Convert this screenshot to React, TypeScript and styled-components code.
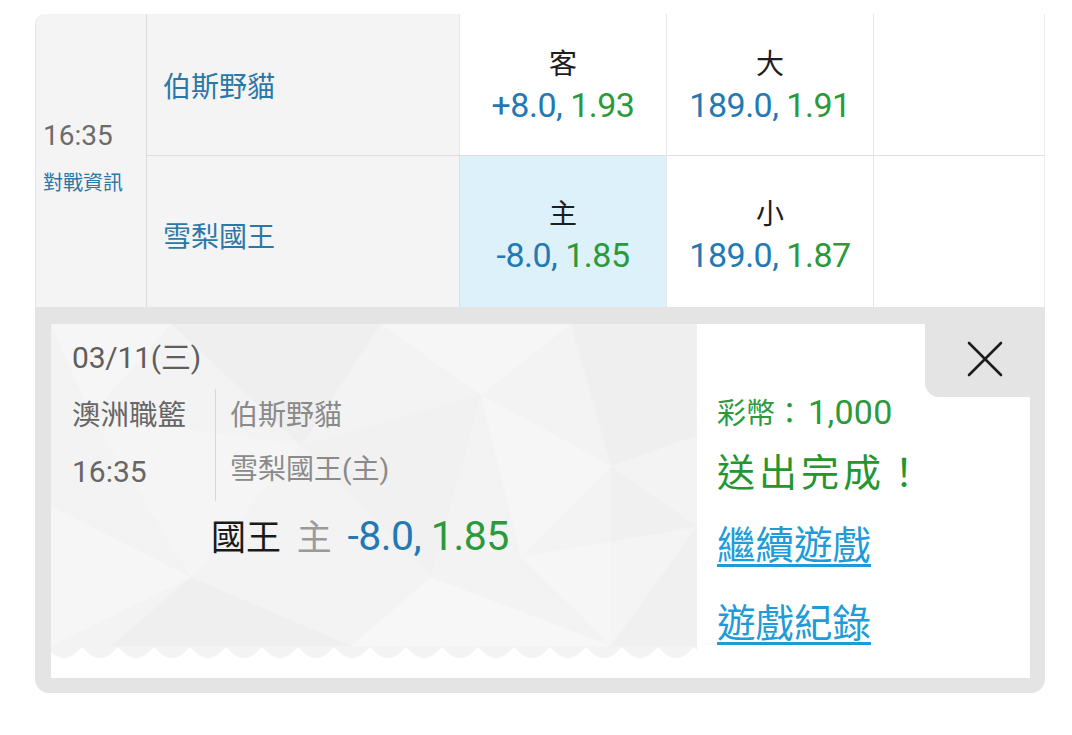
import React from "react";
import styled, { createGlobalStyle } from "styled-components";

const GlobalStyle = createGlobalStyle`
  html, body { margin: 0; padding: 0; background: #ffffff; }
  body { font-family: Roboto, "Noto Sans CJK TC", "Noto Sans", sans-serif; }
  * { box-sizing: border-box; }
`;

const Page = styled.div`
  padding: 14px 27px 0 35px;
`;

const Table = styled.div`
  display: grid;
  grid-template-columns: 111px 312px 207px 207px 1fr;
  grid-template-rows: 142px 151px;
  border-top-left-radius: 10px;
  border-left: 1px solid #e6e6e6;
  border-right: 1px solid #ececec;
  overflow: hidden;
  background: #f4f4f4;
`;

const TimeCell = styled.div`
  grid-row: 1 / span 2;
  display: flex;
  flex-direction: column;
  justify-content: center;
  padding: 0 0 8px 7px;
  border-right: 1px solid #dcdcdc;
`;

const TimeText = styled.div`
  font-size: 28px;
  line-height: 40px;
  color: #6c6c6c;
`;

const InfoLink = styled.div`
  margin-top: 12px;
  font-size: 20px;
  line-height: 30px;
  color: #2a78a8;
`;

const TeamCell = styled.div<{ $last?: boolean }>`
  display: flex;
  align-items: center;
  padding: ${(p) => (p.$last ? "6px" : "0")} 0 0 16px;
  font-size: 28px;
  color: #2a78a8;
  border-bottom: ${(p) => (p.$last ? "none" : "1px solid #dedede")};
`;

const OddsCell = styled.div<{ $active?: boolean; $last?: boolean }>`
  display: flex;
  flex-direction: column;
  align-items: center;
  justify-content: center;
  padding-top: ${(p) => (p.$last ? "6px" : "0")};
  background: ${(p) => (p.$active ? "#ddf1fb" : "#ffffff")};
  border-left: 1px solid ${(p) => (p.$active ? "#c9e2ef" : "#e6e6e6")};
  border-bottom: ${(p) => (p.$last ? "none" : "1px solid #dedede")};
`;

const OddsLabel = styled.div`
  font-size: 28px;
  line-height: 40px;
  color: #1e1e1e;
`;

const OddsValue = styled.div`
  font-size: 34px;
  line-height: 40px;
  letter-spacing: -0.5px;
`;

const Blue = styled.span`
  color: #2279b5;
`;

const Green = styled.span`
  color: #2a9a3a;
`;

const Panel = styled.div`
  background: #e4e4e4;
  padding: 17px 15px 15px 16px;
  border-radius: 0 0 14px 14px;
`;

const Ticket = styled.div`
  display: flex;
  height: 354px;
  background: #ffffff;
`;

const LeftPane = styled.div`
  width: 646px;
  display: flex;
  flex-direction: column;
  padding-bottom: 18px;
`;

const LeftContent = styled.div`
  position: relative;
  flex: 1;
  background: #f3f3f3;
  overflow: hidden;
  padding: 14px 0 0 21px;
`;

const Teeth = styled.svg`
  display: block;
  width: 100%;
  height: 14px;
`;

const Pattern = styled.svg`
  position: absolute;
  inset: 0;
  width: 100%;
  height: 100%;
`;

const Layer = styled.div`
  position: relative;
`;

const DateLine = styled.div`
  font-size: 30px;
  line-height: 40px;
  letter-spacing: -0.2px;
  color: #5e5e5e;
`;

const InfoGrid = styled.div`
  display: flex;
  margin-top: 11px;
`;

const LeagueCol = styled.div`
  width: 144px;
  border-right: 1px solid #d8d8d8;
  margin-bottom: 8px;
`;

const LeagueLine = styled.div`
  font-size: 28.5px;
  line-height: 54px;
  color: #666666;
`;

const TimeLine = styled(LeagueLine)`
  font-size: 30px;
  line-height: 58px;
`;

const NamesCol = styled.div`
  padding-left: 14px;
`;

const NameLine = styled.div`
  font-size: 28px;
  line-height: 54px;
  color: #8a8a8a;
`;

const BetLine = styled.div`
  margin-top: 4px;
  padding-left: 139px;
  font-size: 35px;
  line-height: 46px;
  word-spacing: 7px;
`;

const BetNum = styled.span`
  font-size: 41px;
  letter-spacing: -0.5px;
  word-spacing: 0;
`;

const BetTeam = styled.span`
  color: #1a1a1a;
`;

const BetSide = styled.span`
  color: #9a9a9a;
`;

const RightPane = styled.div`
  position: relative;
  flex: 1;
  padding: 68px 0 0 20px;
`;

const CloseBox = styled.button`
  position: absolute;
  top: 0;
  right: 0;
  width: 105px;
  height: 73px;
  border: none;
  background: #e4e4e4;
  border-bottom-left-radius: 14px;
  display: flex;
  align-items: center;
  justify-content: center;
  padding: 0 0 4px 15px;
  cursor: pointer;
`;

const Coins = styled.div`
  font-size: 29px;
  line-height: 40px;
  color: #2a9a3a;
`;

const CoinNum = styled.span`
  margin-left: 4px;
  font-size: 34px;
  letter-spacing: 0.3px;
`;

const Done = styled.div`
  margin-top: 11px;
  font-size: 38px;
  line-height: 56px;
  letter-spacing: 4px;
  color: #23962f;
`;

const LinkLine = styled.a`
  display: block;
  width: max-content;
  font-size: 38.5px;
  line-height: 78px;
  color: #1e9bd8;
  text-decoration: underline;
  text-decoration-thickness: 3px;
  text-underline-offset: 5px;
`;

const FirstLink = styled(LinkLine)`
  margin-top: 6px;
`;

export default function App() {
  return (
    <>
      <GlobalStyle />
      <Page>
        <Table>
          <TimeCell>
            <TimeText>16:35</TimeText>
            <InfoLink>對戰資訊</InfoLink>
          </TimeCell>
          <TeamCell>伯斯野貓</TeamCell>
          <OddsCell>
            <OddsLabel>客</OddsLabel>
            <OddsValue>
              <Blue>+8.0, </Blue>
              <Green>1.93</Green>
            </OddsValue>
          </OddsCell>
          <OddsCell>
            <OddsLabel>大</OddsLabel>
            <OddsValue>
              <Blue>189.0, </Blue>
              <Green>1.91</Green>
            </OddsValue>
          </OddsCell>
          <OddsCell />
          <TeamCell $last>雪梨國王</TeamCell>
          <OddsCell $active $last>
            <OddsLabel>主</OddsLabel>
            <OddsValue>
              <Blue>-8.0, </Blue>
              <Green>1.85</Green>
            </OddsValue>
          </OddsCell>
          <OddsCell $last>
            <OddsLabel>小</OddsLabel>
            <OddsValue>
              <Blue>189.0, </Blue>
              <Green>1.87</Green>
            </OddsValue>
          </OddsCell>
          <OddsCell $last />
        </Table>
        <Panel>
          <Ticket>
            <LeftPane>
              <LeftContent>
                <Pattern viewBox="0 0 646 318" preserveAspectRatio="none">
                  <polygon points="0,0 120,0 40,90" fill="#ffffff" opacity="0.25" />
                  <polygon points="120,0 330,0 250,120" fill="#e9e9e9" opacity="0.3" />
                  <polygon points="330,0 520,0 430,70" fill="#ffffff" opacity="0.3" />
                  <polygon points="520,0 646,0 646,110 560,140" fill="#e8e8e8" opacity="0.3" />
                  <polygon points="430,70 560,140 470,230" fill="#ffffff" opacity="0.3" />
                  <polygon points="250,120 430,70 380,250" fill="#eeeeee" opacity="0.35" />
                  <polygon points="0,180 140,250 0,318" fill="#ffffff" opacity="0.3" />
                  <polygon points="140,250 300,318 60,318" fill="#e9e9e9" opacity="0.3" />
                  <polygon points="380,250 560,318 300,318" fill="#ffffff" opacity="0.35" />
                  <polygon points="560,140 646,200 646,318 560,318" fill="#eaeaea" opacity="0.3" />
                  <polygon points="470,230 646,200 560,318" fill="#ffffff" opacity="0.25" />
                  <polygon points="40,90 250,120 140,250" fill="#f8f8f8" opacity="0.35" />
                </Pattern>
                <Layer>
                  <DateLine>03/11(三)</DateLine>
                  <InfoGrid>
                    <LeagueCol>
                      <LeagueLine>澳洲職籃</LeagueLine>
                      <TimeLine>16:35</TimeLine>
                    </LeagueCol>
                    <NamesCol>
                      <NameLine>伯斯野貓</NameLine>
                      <NameLine>雪梨國王(主)</NameLine>
                    </NamesCol>
                  </InfoGrid>
                  <BetLine>
                    <BetTeam>國王 </BetTeam>
                    <BetSide>主 </BetSide>
                    <BetNum>
                      <Blue>-8.0, </Blue>
                      <Green>1.85</Green>
                    </BetNum>
                  </BetLine>
                </Layer>
              </LeftContent>
              <Teeth viewBox="0 0 646 14" preserveAspectRatio="none">
                <defs>
                  <pattern id="teeth" width="36" height="14" patternUnits="userSpaceOnUse" x="-5">
                    <path d="M0 0 H36 V1 C30 7 25 12 18 12 C11 12 6 7 0 1 Z" fill="#f3f3f3" />
                  </pattern>
                </defs>
                <rect width="646" height="14" fill="url(#teeth)" />
              </Teeth>
            </LeftPane>
            <RightPane>
              <CloseBox aria-label="close">
                <svg width="36" height="36" viewBox="0 0 36 36">
                  <path d="M2 2 L34 34 M34 2 L2 34" stroke="#1c1c1c" strokeWidth="2.6" strokeLinecap="round" />
                </svg>
              </CloseBox>
              <Coins>
                彩幣：<CoinNum>1,000</CoinNum>
              </Coins>
              <Done>送出完成！</Done>
              <FirstLink href="#">繼續遊戲</FirstLink>
              <LinkLine href="#">遊戲紀錄</LinkLine>
            </RightPane>
          </Ticket>
        </Panel>
      </Page>
    </>
  );
}
